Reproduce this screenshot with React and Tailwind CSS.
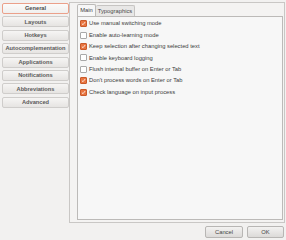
import React from "react";

const items = ["General","Layouts","Hotkeys","Autocomplementation","Applications","Notifications","Abbreviations","Advanced"];
const opts = [
  ["Use manual switching mode", true],
  ["Enable auto-learning mode", false],
  ["Keep selection after changing selected text", true],
  ["Enable keyboard logging", false],
  ["Flush internal buffer on Enter or Tab", false],
  ["Don't process words on Enter or Tab", true],
  ["Check language on input process", true],
];

function Box({ checked }) {
  if (checked)
    return (
      <div className="w-[7px] h-[7px] rounded-[1px] bg-[#e8743f] border border-[#c95a2a] flex items-center justify-center shrink-0">
        <svg width="7" height="7" viewBox="0 0 7 7"><path d="M1.2 3.6 L2.8 5.2 L5.9 1.4" stroke="#fff" strokeWidth="1.1" fill="none" /></svg>
      </div>
    );
  return <div className="w-[7px] h-[7px] rounded-[1px] bg-white border border-[#a9a9a9] shrink-0" />;
}

export default function App() {
  return (
    <div className="w-[286px] h-[240px] bg-[#f2f1f0] flex flex-col" style={{ fontFamily: '"Liberation Sans", sans-serif' }}>
      <div className="flex pt-[2px] h-[223px]">
        <div className="w-[69px] pl-[2px] pt-[1px] flex flex-col gap-[2.4px]">
          {items.map((t, i) => (
            <div key={t} className={"h-[11px] rounded-[2px] border flex items-center justify-center text-[5.7px] font-bold " + (i === 0 ? "border-[#eba08a] bg-gradient-to-b from-[#fbfbfa] to-[#f0efee] text-[#4c4c4c]" : "border-[#cfcdcb] bg-gradient-to-b from-[#f6f5f4] to-[#e6e4e2] text-[#5a5a5a]")}>
              {t}
            </div>
          ))}
        </div>
        <div className="w-[216px] h-[221px] border border-[#c9c7c5] bg-[#f4f3f2] pl-[7px] pr-[1px] pt-[1px] pb-[2px] flex flex-col">
          <div className="flex h-[12px] items-end">
            <div className="h-[12px] w-[19px] border border-b-0 border-[#bcbab8] bg-[#f7f7f7] rounded-t-[2px] flex items-center justify-center text-[5.8px] text-[#3c3c3c]">Main</div>
            <div className="h-[11px] w-[39px] border border-l-0 border-b-0 border-[#c6c4c2] bg-[#e8e7e6] rounded-t-[2px] flex items-center justify-center text-[5.8px] text-[#4a4a4a]">Typographics</div>
          </div>
          <div className="flex-1 border border-[#bcbab8] bg-[#f7f7f7] pl-[2px] pt-[1px] flex flex-col">
            {opts.map(([t, c]) => (
              <div key={t} className="h-[11.4px] flex items-center gap-[2px]">
                <Box checked={c} />
                <span className="text-[5.8px] text-[#3c3c3c] whitespace-nowrap">{t}</span>
              </div>
            ))}
          </div>
        </div>
      </div>
      <div className="flex justify-end gap-[4px] pr-[2px] pt-[3px]">
        <div className="w-[38px] h-[12px] rounded-[2px] border border-[#b8b6b4] bg-gradient-to-b from-[#f3f2f1] to-[#dcdad8] flex items-center justify-center text-[5.8px] text-[#444]">Cancel</div>
        <div className="w-[37px] h-[12px] rounded-[2px] border border-[#b8b6b4] bg-gradient-to-b from-[#f3f2f1] to-[#dcdad8] flex items-center justify-center text-[5.8px] text-[#444]">OK</div>
      </div>
    </div>
  );
}
